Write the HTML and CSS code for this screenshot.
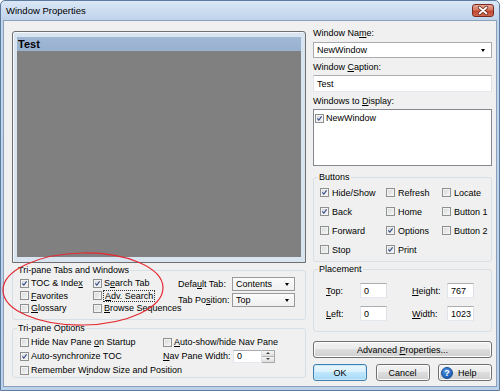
FILE: index.html
```html
<!DOCTYPE html>
<html lang="en">
<head>
    <meta charset="UTF-8">
    <meta name="viewport" content="width=device-width, initial-scale=1.0">
    <title>Window Properties</title>
    <link rel="stylesheet" href="styles.css">
</head>
<body>
<div class="window">
    <div class="titlebar">
        <span class="title">Window Properties</span>
        <span class="close-btn">
            <svg viewBox="0 0 22 13" width="22" height="13">
                <path d="M7.5 3.5l7 6M14.5 3.5l-7 6" stroke="#6b2219" stroke-width="3.4" stroke-linecap="round"/>
                <path d="M7.5 3.5l7 6M14.5 3.5l-7 6" stroke="#fff" stroke-width="1.8" stroke-linecap="round"/>
            </svg>
        </span>
    </div>

    <div class="client">
        <div class="left-col">
            <div class="preview">
                <div class="preview-title">Test</div>
                <div class="preview-body"></div>
            </div>

            <fieldset class="group tabs-group">
                <legend>Tri-pane Tabs and Windows</legend>
                <div class="tabs-content">
                    <div class="tabs-checks">
                        <label class="check"><span class="box"><svg viewBox="0 0 9 9"><path d="M1.8 4.4l1.8 2.3 3.6-5"/></svg></span><span>TOC &amp; Inde<u>x</u></span></label>
                        <label class="check"><span class="box"><svg viewBox="0 0 9 9"><path d="M1.8 4.4l1.8 2.3 3.6-5"/></svg></span><span>S<u>e</u>arch Tab</span></label>
                        <label class="check"><span class="box"></span><span><u>F</u>avorites</span></label>
                        <label class="check"><span class="box"></span><span class="focus"><u>A</u>dv. Search</span></label>
                        <label class="check"><span class="box"></span><span><u>G</u>lossary</span></label>
                        <label class="check"><span class="box"></span><span><u>B</u>rowse Sequences</span></label>
                    </div>
                    <div class="tabs-selects">
                        <div class="select-row">
                            <span class="select-label">Defa<u>u</u>lt Tab:</span>
                            <span class="combo small">Contents<i class="arrow"></i></span>
                        </div>
                        <div class="select-row">
                            <span class="select-label">Tab Po<u>s</u>ition:</span>
                            <span class="combo small">Top<i class="arrow"></i></span>
                        </div>
                    </div>
                </div>
            </fieldset>

            <fieldset class="group options-group">
                <legend>Tri-pane Options</legend>
                <div class="options-grid">
                    <label class="check"><span class="box"></span><span>Hide Nav Pane <u>o</u>n Startup</span></label>
                    <label class="check"><span class="box"></span><span><u>A</u>uto-show/hide Nav Pane</span></label>
                    <label class="check"><span class="box"><svg viewBox="0 0 9 9"><path d="M1.8 4.4l1.8 2.3 3.6-5"/></svg></span><span>Auto-synchronize TOC</span></label>
                    <div class="spin-row">
                        <span class="spin-label"><u>N</u>av Pane Width:</span>
                        <span class="textbox spin-box">0</span>
                        <span class="updown">
                            <span class="ud-half"><i class="arrow up"></i></span>
                            <span class="ud-half"><i class="arrow"></i></span>
                        </span>
                    </div>
                    <label class="check"><span class="box"></span><span>Remember W<u>i</u>ndow Size and Position</span></label>
                </div>
            </fieldset>
        </div>

        <div class="right-col">
            <div class="field-label">Window Na<u>m</u>e:</div>
            <div class="combo wide">NewWindow<i class="arrow"></i></div>

            <div class="field-label gap">Window <u>C</u>aption:</div>
            <div class="textbox caption-box">Test</div>

            <div class="field-label gap">Windows to <u>D</u>isplay:</div>
            <div class="listbox">
                <label class="check"><span class="box"><svg viewBox="0 0 9 9"><path d="M1.8 4.4l1.8 2.3 3.6-5"/></svg></span><span>NewWindow</span></label>
            </div>

            <fieldset class="group buttons-group">
                <legend>Buttons</legend>
                <div class="buttons-grid">
                    <label class="check"><span class="box"><svg viewBox="0 0 9 9"><path d="M1.8 4.4l1.8 2.3 3.6-5"/></svg></span><span>Hide/Show</span></label>
                    <label class="check"><span class="box"></span><span>Refresh</span></label>
                    <label class="check"><span class="box"></span><span>Locate</span></label>
                    <label class="check"><span class="box"><svg viewBox="0 0 9 9"><path d="M1.8 4.4l1.8 2.3 3.6-5"/></svg></span><span>Back</span></label>
                    <label class="check"><span class="box"></span><span>Home</span></label>
                    <label class="check"><span class="box"></span><span>Button 1</span></label>
                    <label class="check"><span class="box"></span><span>Forward</span></label>
                    <label class="check"><span class="box"><svg viewBox="0 0 9 9"><path d="M1.8 4.4l1.8 2.3 3.6-5"/></svg></span><span>Options</span></label>
                    <label class="check"><span class="box"></span><span>Button 2</span></label>
                    <label class="check"><span class="box"></span><span>Stop</span></label>
                    <label class="check"><span class="box"><svg viewBox="0 0 9 9"><path d="M1.8 4.4l1.8 2.3 3.6-5"/></svg></span><span>Print</span></label>
                </div>
            </fieldset>

            <fieldset class="group placement-group">
                <legend>Placement</legend>
                <div class="placement-grid">
                    <span><u>T</u>op:</span>
                    <span class="textbox num">0</span>
                    <span><u>H</u>eight:</span>
                    <span class="textbox num">767</span>
                    <span><u>L</u>eft:</span>
                    <span class="textbox num">0</span>
                    <span><u>W</u>idth:</span>
                    <span class="textbox num">1023</span>
                </div>
            </fieldset>

            <button class="btn advanced-btn">Advanced <u>P</u>roperties...</button>

            <div class="dialog-buttons">
                <button class="btn default-btn">OK</button>
                <button class="btn">Cancel</button>
                <button class="btn help-btn"><span class="help-icon">?</span><span>Help</span></button>
            </div>
        </div>
    </div>

    <svg class="highlight" width="500" height="391" viewBox="0 0 500 391">
        <ellipse cx="83" cy="289" rx="80" ry="36" transform="rotate(-1 83 289)"/>
    </svg>
</div>
</body>
</html>
```

FILE: styles.css
```css
* {
    box-sizing: border-box;
}

body {
    margin: 0;
    font-family: "Liberation Sans", Arial, sans-serif;
    font-size: 9px;
    color: #000;
    background-color: #fff;
}

.window {
    position: relative;
    width: 500px;
    height: 391px;
    border: 1px solid #5d7b9e;
    border-radius: 5px 5px 0 0;
    padding: 0 2px 3px;
    background: linear-gradient(#dae7f6, #c0d4ec 18px, #bcd1ea);
    display: flex;
    flex-direction: column;
}

.titlebar {
    height: 19px;
    display: flex;
    align-items: center;
    justify-content: space-between;
    padding: 0 3px 0 3px;
}

.title {
    font-size: 9.5px;
}

.close-btn {
    width: 22px;
    height: 13px;
    border: 1px solid #7a2a20;
    border-radius: 3px;
    background: linear-gradient(#e6a793, #d47a64 45%, #c2432e 55%, #cf6a50);
    display: flex;
    align-items: center;
    justify-content: center;
    overflow: hidden;
}

.close-btn svg {
    flex: none;
}

.client {
    flex: 1;
    background-color: #f0f0f0;
    border: 1px solid #8aa0bb;
    display: flex;
    gap: 7px;
    padding: 7px 4px 0 8px;
}

.left-col {
    width: 294px;
    padding-top: 3px;
    display: flex;
    flex-direction: column;
}

.right-col {
    width: 179px;
    display: flex;
    flex-direction: column;
}

/* preview pane */
.preview {
    height: 232px;
    border: 1px solid #6f6f6f;
    border-radius: 3px 3px 0 0;
    background: #d9e4f1;
    box-shadow: inset 1px 1px 0 #f4f8fc;
    padding: 5px 4px 5px 4px;
    display: flex;
    flex-direction: column;
}

.preview-title {
    height: 14px;
    line-height: 14px;
    background: linear-gradient(#a1b8d4, #98b1cf);
    font-size: 11px;
    font-weight: bold;
    padding-left: 1px;
}

.preview-body {
    flex: 1;
    background-color: #808080;
}

/* group boxes */
.group {
    margin: 0;
    padding: 0;
    min-width: 0;
    border: 1px solid #d5dfe5;
    border-radius: 3px;
}

.group legend {
    margin-left: 4px;
    padding: 0 1px;
    line-height: 11px;
}

.tabs-group {
    margin-top: 2px;
}

.tabs-content {
    display: flex;
    padding: 1px 0 4.5px 7px;
}

.tabs-checks {
    display: grid;
    grid-template-columns: 73px 85px;
    grid-auto-rows: 12.5px;
}

.tabs-selects {
    display: flex;
    flex-direction: column;
    gap: 2px;
}

.select-row {
    display: flex;
    align-items: center;
}

.select-label {
    width: 54px;
}

.options-group {
    margin-top: 3px;
}

.options-grid {
    display: grid;
    grid-template-columns: 143px auto;
    grid-auto-rows: 14px;
    padding: 1px 0 0 7px;
}

.spin-row {
    display: flex;
    align-items: center;
}

.spin-label {
    width: 70px;
}

.spin-box {
    width: 29px;
    height: 13px;
}

.updown {
    width: 13px;
    height: 13px;
    display: flex;
    flex-direction: column;
    border: 1px solid #a9a9a9;
    border-left: none;
}

.ud-half {
    flex: 1;
    display: flex;
    align-items: center;
    justify-content: center;
    background: linear-gradient(#f5f5f5, #dedede);
}

.ud-half + .ud-half {
    border-top: 1px solid #b5b5b5;
}

/* checkboxes */
.check {
    display: flex;
    align-items: center;
    gap: 2px;
    white-space: nowrap;
}

.box {
    width: 9px;
    height: 9px;
    flex: none;
    border: 1px solid #8e8f8f;
    background: linear-gradient(135deg, #d3d6da, #f7f7f7);
    box-shadow: inset 0 0 0 1px #f3f3f3;
    display: flex;
}

.box svg {
    width: 7px;
    height: 7px;
    fill: none;
    stroke: #2f4686;
    stroke-width: 1.4;
}

.focus {
    outline: 1px dotted #333;
    padding: 0 1px;
}

/* inputs */
.combo {
    background-color: #fff;
    border: 1px solid #a9abb1;
    display: flex;
    align-items: center;
    justify-content: space-between;
    padding: 0 5px 0 3px;
}

.combo.small {
    width: 63px;
    height: 14px;
    background: linear-gradient(#fbfbfb, #f0f0f0);
    border-color: #9a9a9a;
}

.combo.wide {
    height: 16px;
    margin-top: 3px;
    padding-right: 6px;
}

.arrow {
    width: 0;
    height: 0;
    border-left: 2.5px solid transparent;
    border-right: 2.5px solid transparent;
    border-top: 3px solid #000;
}

.arrow.up {
    border-top: none;
    border-bottom: 3px solid #000;
}

.ud-half .arrow {
    border-left-width: 2px;
    border-right-width: 2px;
    border-top-width: 2px;
    border-top-color: #444;
}

.ud-half .arrow.up {
    border-bottom-width: 2px;
    border-bottom-color: #444;
}

.textbox {
    background-color: #fff;
    border: 1px solid;
    border-color: #abadb3 #dbdfe6 #e3e9ef #e2e3ea;
    display: flex;
    align-items: center;
    padding-left: 3px;
}

.field-label {
    line-height: 11px;
}

.field-label.gap {
    margin-top: 4px;
}

.caption-box {
    height: 17px;
    margin-top: 2px;
}

.listbox {
    height: 57px;
    margin-top: 2px;
    background-color: #fff;
    border: 1px solid #828790;
    padding: 2px 1px;
}

.listbox .check {
    height: 12px;
}

.buttons-group {
    margin-top: 6px;
}

.buttons-grid {
    display: grid;
    grid-template-columns: 66px 56px auto;
    grid-auto-rows: 19px;
    padding: 0 0 2px 6px;
}

.buttons-grid .check {
    gap: 3px;
}

.placement-group {
    margin-top: 2px;
}

.placement-grid {
    display: grid;
    grid-template-columns: 34px 52px 35px 27px;
    grid-auto-rows: 15px;
    row-gap: 8px;
    align-items: center;
    padding: 8px 0 10px 12px;
}

.num {
    width: 27px;
    height: 15px;
}

/* push buttons */
.btn {
    font-family: inherit;
    font-size: 9px;
    color: #000;
    height: 17px;
    padding: 0;
    border: 1px solid #707070;
    border-radius: 3px;
    background: linear-gradient(#f2f2f2, #ebebeb 50%, #dddddd 50%, #cfcfcf);
    box-shadow: inset 0 0 0 1px #fcfcfc;
}

.advanced-btn {
    margin-top: 9px;
    width: 100%;
}

.dialog-buttons {
    margin-top: 6px;
    display: flex;
    justify-content: space-between;
}

.dialog-buttons .btn {
    width: 54px;
}

.default-btn {
    border-color: #3c7fb1;
    background: linear-gradient(#eaf6fd, #d9f0fc 50%, #bee6fd 50%, #a7d9f5);
    box-shadow: inset 0 0 0 1px #cdeafb;
}

.help-btn {
    display: flex;
    align-items: center;
    gap: 5px;
    padding-left: 2px;
}

.help-icon {
    width: 12px;
    height: 12px;
    border-radius: 50%;
    background: radial-gradient(circle at 40% 30%, #5a9be0, #1c5fb8 70%);
    border: 1px solid #174c95;
    color: #fff;
    font-weight: bold;
    font-size: 9px;
    line-height: 10px;
    text-align: center;
}

.highlight {
    position: absolute;
    left: -1px;
    top: -1px;
    pointer-events: none;
}

.highlight ellipse {
    fill: none;
    stroke: #e42a32;
    stroke-width: 1.2;
}
```
